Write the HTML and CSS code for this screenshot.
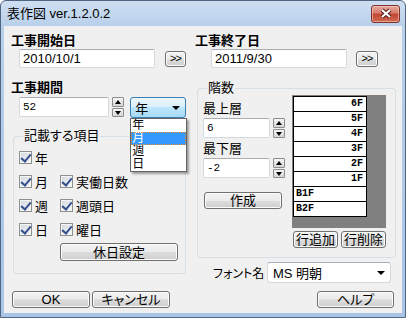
FILE: index.html
```html
<!DOCTYPE html>
<html lang="ja">
  <head>
    <meta charset="UTF-8" />
    <title>表作図 ver.1.2.0.2</title>
    <link rel="stylesheet" href="styles.css">
  </head>
  <body>
    <div class="window">
      <div class="titlebar">
        <span class="title">表作図 ver.1.2.0.2</span>
        <button class="close">
          <svg width="14" height="11" viewBox="0 0 14 11">
            <path d="M3 2 L11 9 M11 2 L3 9" stroke="#4a1a14" stroke-width="4.2" />
            <path d="M3 2 L11 9 M11 2 L3 9" stroke="#fff" stroke-width="2.2" />
          </svg>
        </button>
      </div>

      <div class="client">
        <!-- dates -->
        <div class="dates">
          <div class="field start">
            <div class="heading">工事開始日</div>
            <div class="field-row">
              <div class="textbox date">2010/10/1</div>
              <button class="btn pick">&gt;&gt;</button>
            </div>
          </div>
          <div class="field end">
            <div class="heading">工事終了日</div>
            <div class="field-row">
              <div class="textbox date">2011/9/30</div>
              <button class="btn pick">&gt;&gt;</button>
            </div>
          </div>
        </div>

        <div class="main">
          <div class="left">
            <div class="heading">工事期間</div>
            <div class="field-row period">
              <div class="textbox num period-num">52</div>
              <div class="spin"><span class="up"></span><span class="down"></span></div>
              <div class="combo unit">
                年<span class="arrow"></span>
                <ul class="droplist">
                  <li>年</li>
                  <li class="selected">月</li>
                  <li>週</li>
                  <li>日</li>
                </ul>
              </div>
            </div>

            <fieldset class="group items">
              <legend>記載する項目</legend>
              <div class="checks">
                <label class="check"><span class="box"></span>年</label>
                <span></span>
                <label class="check"><span class="box"></span>月</label>
                <label class="check"><span class="box"></span>実働日数</label>
                <label class="check"><span class="box"></span>週</label>
                <label class="check"><span class="box"></span>週頭日</label>
                <label class="check"><span class="box"></span>日</label>
                <label class="check"><span class="box"></span>曜日</label>
              </div>
              <button class="btn holiday">休日設定</button>
            </fieldset>
          </div>

          <div class="right">
            <fieldset class="group floors">
              <legend>階数</legend>
              <div class="floor-body">
                <div class="floor-inputs">
                  <div class="sub">最上層</div>
                  <div class="field-row">
                    <div class="textbox num floor-num">6</div>
                    <div class="spin"><span class="up"></span><span class="down"></span></div>
                  </div>
                  <div class="sub second">最下層</div>
                  <div class="field-row">
                    <div class="textbox num floor-num">-2</div>
                    <div class="spin"><span class="up"></span><span class="down"></span></div>
                  </div>
                  <button class="btn make">作成</button>
                </div>
                <div class="floor-list">
                  <div class="grid">
                    <div class="rows">
                      <div class="cell">6F</div>
                      <div class="cell">5F</div>
                      <div class="cell">4F</div>
                      <div class="cell">3F</div>
                      <div class="cell">2F</div>
                      <div class="cell">1F</div>
                      <div class="cell basement">B1F</div>
                      <div class="cell basement">B2F</div>
                    </div>
                  </div>
                  <div class="list-buttons">
                    <button class="btn row-btn">行追加</button>
                    <button class="btn row-btn">行削除</button>
                  </div>
                </div>
              </div>
            </fieldset>

            <div class="font-row">
              <span class="font-label">フォント名</span>
              <div class="combo font">MS 明朝<span class="arrow"></span></div>
            </div>
          </div>
        </div>

        <div class="footer">
          <button class="btn foot">OK</button>
          <button class="btn foot">キャンセル</button>
          <button class="btn foot help">ヘルプ</button>
        </div>
      </div>
    </div>
  </body>
</html>
```

FILE: styles.css
```css
* {
  margin: 0;
  padding: 0;
  box-sizing: border-box;
}

body {
  width: 406px;
  height: 318px;
  overflow: hidden;
  background: #fff;
  font-family: "Liberation Sans", "Noto Sans CJK JP", sans-serif;
  font-size: 13px;
  color: #000;
  font-feature-settings: "palt";
}

/* window frame */
.window {
  width: 406px;
  height: 318px;
  display: flex;
  flex-direction: column;
  border: 1px solid #4f6682;
  border-radius: 6px 6px 0 0;
  background: linear-gradient(#cfdff2, #b9d0ea 25px, #a9c4e6);
  padding: 0 3px 4px 3px;
}

.titlebar {
  height: 25px;
  display: flex;
  align-items: center;
  padding-left: 3px;
}

.title {
  flex: 1;
  line-height: 16px;
}

.close {
  width: 29px;
  height: 18px;
  margin-right: 2px;
  border: 1px solid #7d3128;
  border-radius: 3px;
  background: linear-gradient(#e6aa9f 0%, #d6786a 45%, #c14631 50%, #cf6a55 100%);
  box-shadow: inset 0 0 0 1px rgba(255, 220, 210, 0.5);
  display: flex;
  align-items: center;
  justify-content: center;
}

.client {
  flex: 1;
  display: flex;
  flex-direction: column;
  background: #f0f0f0;
}

/* common controls */
.heading {
  font-weight: bold;
  height: 16px;
  line-height: 16px;
}

.field-row {
  display: flex;
  align-items: center;
}

.textbox {
  background: #fff;
  border: 1px solid #d5d9de;
  border-top-color: #abadb3;
  border-radius: 2px;
  padding-left: 3px;
  display: flex;
  align-items: center;
}

.num {
  font-family: "Liberation Mono", monospace;
  font-size: 11px;
}

.btn {
  font: inherit;
  color: #000;
  border: 1px solid #707070;
  border-radius: 3px;
  background: linear-gradient(#f2f2f2 0%, #ebebeb 50%, #dddddd 50%, #cfcfcf 100%);
  box-shadow: inset 0 0 0 1px #fbfbfb;
  line-height: 15px;
}

.spin {
  width: 12px;
  height: 20px;
  margin-left: 3px;
  display: flex;
  flex-direction: column;
  gap: 1px;
}

.spin span {
  flex: 1;
  position: relative;
  border: 1px solid #8c8c8c;
  border-radius: 1px;
  background: linear-gradient(#f6f6f6, #d6d6d6);
}

.spin span::after {
  content: "";
  position: absolute;
  left: 2px;
  top: 2px;
  border-left: 3px solid transparent;
  border-right: 3px solid transparent;
}

.spin .up::after {
  border-bottom: 4px solid #000;
}

.spin .down::after {
  border-top: 4px solid #000;
}

.combo {
  position: relative;
  display: flex;
  align-items: center;
  padding-left: 4px;
  border-radius: 3px;
}

.arrow {
  position: absolute;
  right: 5px;
  top: 8px;
  border-left: 4px solid transparent;
  border-right: 4px solid transparent;
  border-top: 4px solid #000;
}

/* dates */
.dates {
  display: flex;
  padding-top: 7px;
}

.field.start {
  width: 191px;
  padding-left: 7px;
}

.start .field-row {
  margin-left: 8px;
}

.end .field-row {
  margin-left: 16px;
}

.date {
  width: 136px;
  height: 19px;
}

.pick {
  width: 21px;
  height: 16px;
  margin-left: 10px;
  font-size: 11px;
  letter-spacing: -1px;
  line-height: 13px;
}

.end .pick {
  width: 22px;
  margin-left: 9px;
}

/* main area */
.main {
  display: flex;
  margin-top: 12px;
}

.left {
  width: 175px;
  margin-left: 7px;
}

.left .heading {
  margin-bottom: 1px;
}

.period {
  margin-left: 8px;
  align-items: flex-start;
}

.period-num {
  width: 91px;
  height: 20px;
}

.unit {
  width: 56px;
  height: 21px;
  margin-left: 6px;
  border: 1px solid #3c7fb1;
  background: linear-gradient(#eaf6fd 0%, #d9f0fc 50%, #bee6fd 50%, #a7d9f5 100%);
  z-index: 2;
}

.droplist {
  position: absolute;
  left: -1px;
  top: 20px;
  width: 57px;
  list-style: none;
  background: #fff;
  border: 1px solid #646464;
  box-shadow: 2px 2px 2px rgba(0, 0, 0, 0.35);
}

.droplist li {
  height: 13px;
  line-height: 13px;
  font-size: 12px;
  padding-left: 1px;
  overflow: hidden;
}

.droplist .selected {
  background: #3399ff;
  color: #fff;
  outline: 1px dotted #e8902c;
  outline-offset: -1px;
}

.group {
  border: 1px solid #d5dfe5;
  border-radius: 3px;
  min-width: 0;
}

.group legend {
  margin-left: 4px;
  padding: 0 1px;
  line-height: 14px;
}

.items {
  margin: 11px 0 0 2px;
  width: 173px;
  padding: 2px 0 12px 5px;
}

.checks {
  display: grid;
  grid-template-columns: 41px auto;
  grid-auto-rows: 24px;
}

.check {
  display: flex;
  align-items: center;
  gap: 3px;
}

.box {
  position: relative;
  width: 13px;
  height: 13px;
  border: 1px solid #8e8f8f;
  background: linear-gradient(135deg, #d2d6dc, #f8f8f8);
  box-shadow: inset 0 0 0 1px #f4f4f4;
}

.box::after {
  content: "";
  position: absolute;
  left: 3px;
  top: 0;
  width: 4px;
  height: 8px;
  border-right: 2px solid #34508e;
  border-bottom: 2px solid #34508e;
  transform: rotate(40deg);
}

.holiday {
  display: block;
  width: 118px;
  height: 18px;
  margin: 2px 0 0 41px;
}

/* floors */
.right {
  margin-left: 11px;
  width: 199px;
}

.floors {
  margin-top: 1px;
  padding: 0 0 9px 5px;
}

.floor-body {
  display: flex;
}

.floor-inputs {
  width: 89px;
  padding-top: 4px;
}

.sub {
  height: 19px;
  line-height: 19px;
}

.sub.second {
  margin-top: 1px;
}

.floor-num {
  width: 67px;
  height: 20px;
}

.make {
  display: block;
  width: 78px;
  height: 17px;
  margin: 14px 0 0 1px;
}

.grid {
  width: 94px;
  height: 133px;
  background: #808080;
  padding: 1px 0 0 1px;
}

.rows {
  width: 74px;
  border: 1px solid #000;
  border-top: none;
}

.cell {
  height: 15px;
  border-top: 1px solid #000;
  background: #fff;
  font-family: "Liberation Mono", monospace;
  font-weight: bold;
  font-size: 10px;
  line-height: 14px;
  text-align: right;
  padding-right: 3px;
}

.cell.basement {
  text-align: left;
  padding-left: 2px;
}

.list-buttons {
  display: flex;
  gap: 3px;
  margin: 3px 0 0 1px;
}

.row-btn {
  width: 45px;
  height: 17px;
}

.font-row {
  display: flex;
  align-items: center;
  margin-top: 4px;
  padding-left: 16px;
}

.font-label {
  width: 54px;
  font-size: 12px;
}

.font {
  width: 124px;
  height: 21px;
  background: #fff;
  border: 1px solid #d5d9de;
  border-top-color: #abadb3;
  padding-left: 5px;
}

/* bottom buttons */
.footer {
  display: flex;
  margin-top: 8px;
  padding: 0 8px;
}

.foot {
  width: 78px;
  height: 17px;
}

.foot + .foot {
  margin-left: 2px;
}

.foot.help {
  width: 77px;
  margin-left: auto;
}
```
